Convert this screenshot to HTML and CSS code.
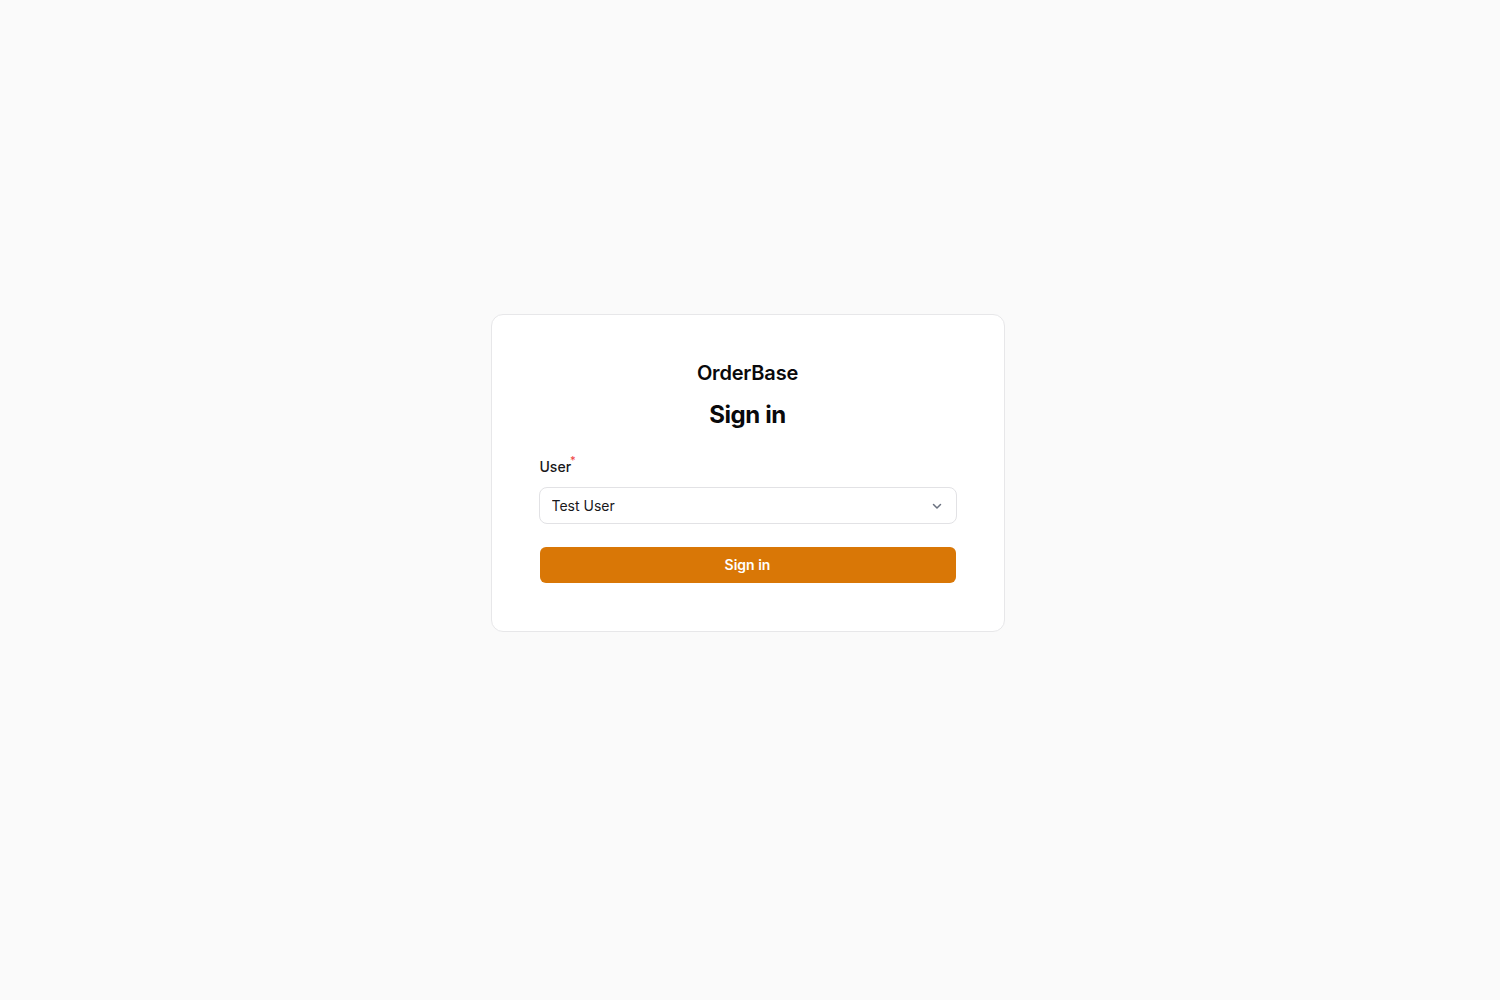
FILE: index.html
```html
<!DOCTYPE html>
<html lang="en">
<head>
<meta charset="utf-8">
<title>OrderBase – Sign in</title>
<link rel="stylesheet" href="styles.css">
</head>
<body>
<main class="page">
  <section class="card">
    <div class="brand">OrderBase</div>
    <h1 class="title">Sign in</h1>
    <form class="form">
      <div class="field">
        <label class="label" for="user">User<span class="req">*</span></label>
        <div class="select-wrap">
          <select id="user" class="select">
            <option>Test User</option>
          </select>
          <svg class="chevron" width="16" height="16" viewBox="0 0 16 16" fill="none" stroke="currentColor" stroke-width="1.5" stroke-linecap="round" stroke-linejoin="round"><path d="M4.5 6.5 8 10l3.5-3.5"/></svg>
        </div>
      </div>
      <button type="button" class="btn">Sign in</button>
    </form>
  </section>
</main>
</body>
</html>
```
FILE: styles.css
```css
* { box-sizing: border-box; }
html, body { margin: 0; padding: 0; }
body {
  background: #fafafa;
  font-family: Inter, "Noto Sans", "Liberation Sans", sans-serif;
  color: #09090b;
  -webkit-font-smoothing: antialiased;
}
.page {
  min-height: 1000px;
  display: flex;
  align-items: center;
  justify-content: center;
  padding-bottom: 55px;
  padding-right: 5px;
}
.card {
  width: 514px;
  background: #ffffff;
  border: 1px solid #e7e7e9;
  border-radius: 12px;
  padding: 44px 48px 48px;
  display: flex;
  flex-direction: column;
}
.brand {
  text-align: center;
  font-size: 20px;
  line-height: 28px;
  font-weight: 600;
  letter-spacing: -0.2px;
}
.title {
  margin: 12px 0 0;
  text-align: center;
  font-size: 24px;
  line-height: 32px;
  font-weight: 700;
  letter-spacing: -0.4px;
}
.form {
  margin-top: 26px;
  display: flex;
  flex-direction: column;
  gap: 23px;
}
.field {
  display: flex;
  flex-direction: column;
  gap: 10px;
}
.label {
  font-size: 14px;
  line-height: 20px;
  font-weight: 500;
  color: #18181b;
  display: flex;
  align-items: flex-start;
}
.req {
  color: #ef4444;
  font-size: 11px;
  line-height: 11px;
  margin-left: -1px;
  margin-top: -2px;
}
.select-wrap {
  position: relative;
  margin: 0 -1px;
}
.select {
  appearance: none;
  -webkit-appearance: none;
  width: 100%;
  height: 37px;
  border: 1px solid #e2e2e5;
  border-radius: 8px;
  background: #ffffff;
  padding: 0 36px 0 12px;
  font-family: inherit;
  font-size: 14px;
  color: #18181b;
  outline: none;
}
.chevron {
  position: absolute;
  right: 12px;
  top: 11px;
  color: #6b7280;
  pointer-events: none;
}
.btn {
  height: 36px;
  border: 0;
  border-radius: 6px;
  background: #d97706;
  color: #ffffff;
  font-family: inherit;
  font-size: 14px;
  font-weight: 600;
  cursor: pointer;
}
```
